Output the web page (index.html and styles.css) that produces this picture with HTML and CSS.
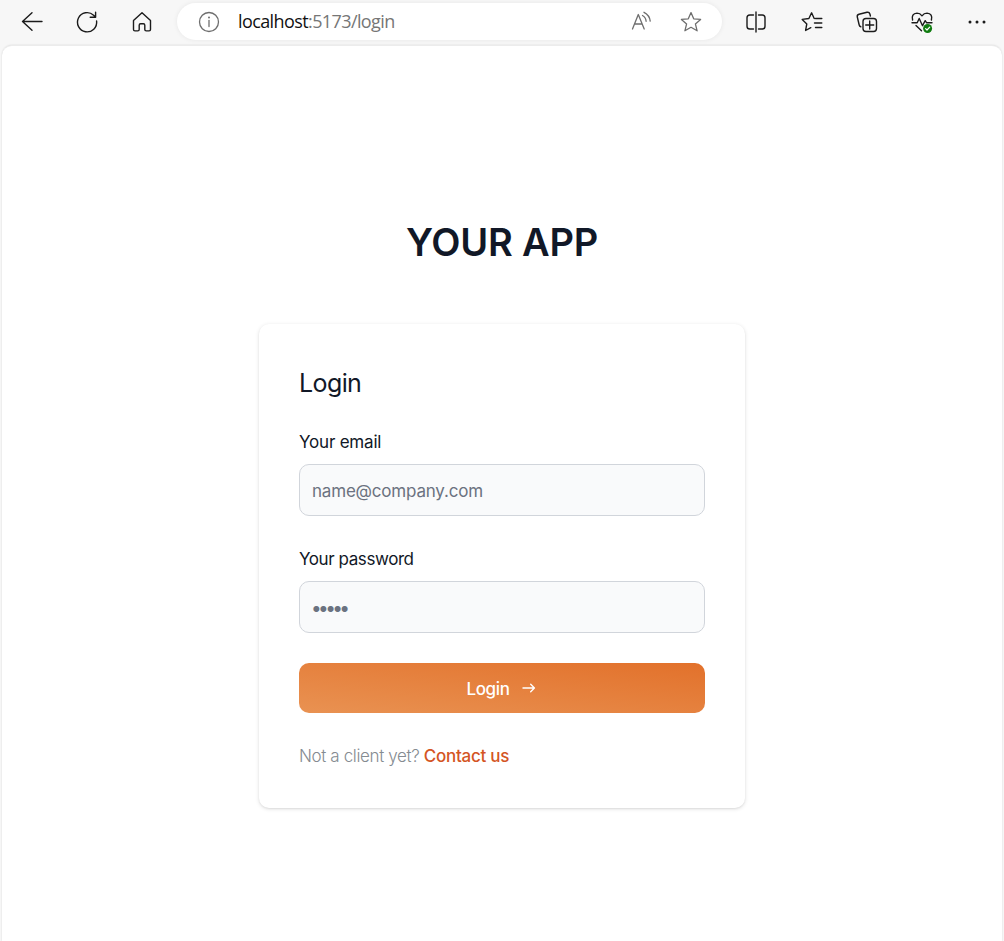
FILE: index.html
```html
<!DOCTYPE html>
<html lang="en">
<head>
<meta charset="utf-8">
<title>Login</title>
<link rel="stylesheet" href="styles.css">
</head>
<body>
<header class="toolbar">
  <svg class="icon back" viewBox="0 0 24 24"><path d="M22 11.500H2.500M12 2.800 2.500 11.500l9.500 8.700"/></svg>
  <svg class="icon reload" viewBox="0 0 24 24"><path d="M21.600 11A9.600 9.600 0 1 1 18.600 5.200L20.500 7M20.600 2.300v5h-5.400"/></svg>
  <svg class="icon home" viewBox="0 0 24 24"><path d="M3.500 10.500 12 2.700l8.500 7.800v9q0 1.400-1.400 1.400h-2.900q-1.400 0-1.400-1.400v-4.300q0-1.400-1.400-1.400h-2.800q-1.400 0-1.400 1.400v4.300q0 1.400-1.400 1.400H4.900q-1.400 0-1.400-1.400z"/></svg>
  <div class="address">
    <svg class="icon info" viewBox="0 0 24 24"><circle cx="12" cy="12" r="9.500"/><path d="M12 10.500v6"/><circle class="solid" cx="12" cy="7.600" r="1"/></svg>
    <span class="url"><span class="host">localhost</span><span class="path">:5173/login</span></span>
    <svg class="icon read" viewBox="0 0 24 24"><path d="M2.500 19 8.300 4.500 14.200 19M4.600 14h7.500M12.500 5.500q3.500 2 3.600 5.800M14 2.300q5.600 2.800 6.200 8.800"/></svg>
    <svg class="icon star" viewBox="0 0 24 24"><path d="m12 2.600 2.700 6.200 6.900.6-5.200 4.500 1.700 6.900-6.100-3.500-6.100 3.500 1.700-6.900-5.200-4.500 6.900-.6z"/></svg>
  </div>
  <svg class="icon split" viewBox="0 0 24 24"><path d="M9.500 5H5.800Q3 5 3 7.800v8.400Q3 19 5.800 19h3.700M14.500 5h3.700Q21 5 21 7.800v8.400q0 2.800-2.800 2.800h-3.700M12 2v20"/></svg>
  <svg class="icon favorites" viewBox="0 0 24 24"><path d="M14.200 8.500 11.600 2.800 8.900 8.500l-6.700.9 4.600 4.500-1.200 6.600 5.200-2.800M15.500 8.500h6.300M14.500 13h7.300M15.500 17.500h6.300"/></svg>
  <svg class="icon collections" viewBox="0 0 24 24"><path d="M5.800 16.800Q4.500 16.500 4.200 15L2.300 7Q1.800 4.800 4 4.200l8-1.900q2.200-.5 2.900 1.700l.5 2"/><rect x="8" y="8.500" width="13.500" height="13" rx="3"/><path d="M14.700 11v8M10.700 15h8"/></svg>
  <svg class="icon health" viewBox="0 0 24 24"><path d="M2.600 10Q1 3.500 7 3.100q3 0 5 2.700 2-2.700 5-2.700Q23 3.500 21.400 10M2 12.800h5.200l2-4.300 3.300 7.200 2.700-5 1.500 2.100H22M6 15.500l5.500 5.200"/><circle class="badge" cx="17.600" cy="18.500" r="4.500"/><path class="check" d="m15.600 18.600 1.400 1.400 2.700-2.800"/></svg>
  <svg class="icon more" viewBox="0 0 24 24"><circle class="solid" cx="5" cy="12" r="1.500"/><circle class="solid" cx="12" cy="12" r="1.500"/><circle class="solid" cx="19" cy="12" r="1.500"/></svg>
</header>
<main class="page">
  <h1 class="brand">YOUR APP</h1>
  <form class="card">
    <h2 class="title">Login</h2>
    <label class="label label-email" for="email">Your email</label>
    <input class="field" id="email" type="email" placeholder="name@company.com">
    <label class="label label-password" for="password">Your password</label>
    <input class="field password" id="password" type="password" placeholder="•••••">
    <button class="submit" type="button"><span>Login</span><svg class="arrow" viewBox="0 0 14 10"><path d="M1 5h11.300M8.700 1.300 12.400 5 8.700 8.700"/></svg></button>
    <p class="signup"><span class="question">Not a client yet?</span> <a class="contact" href="#">Contact us</a></p>
  </form>
</main>
</body>
</html>
```
FILE: styles.css
```css
* { box-sizing: border-box; }
body {
  margin: 0;
  height: 941px;
  overflow: hidden;
  display: flex;
  flex-direction: column;
  background: #f7f7f7;
  font-family: Inter, "Liberation Sans", sans-serif;
}
.toolbar {
  height: 45px;
  flex: none;
  display: flex;
  align-items: center;
  padding: 0 15px 2px 20px;
}
.icon {
  width: 24px;
  height: 24px;
  flex: none;
  fill: none;
  stroke: #1b1b1b;
  stroke-width: 1.4;
  stroke-linecap: round;
  stroke-linejoin: round;
}
.reload, .home { margin-left: 31px; }
.address {
  width: 545px;
  height: 37px;
  margin-left: 23px;
  padding: 0 19px 0 20px;
  display: flex;
  align-items: center;
  border-radius: 19px;
  background: #fff;
  box-shadow: 0 0 5px rgba(0, 0, 0, .07);
}
.address .icon { stroke: #6e6e6e; stroke-width: 1.3; }
.address .info .solid { fill: #6e6e6e; stroke: none; }
.url {
  flex: 1;
  margin: -2px 0 0 17px;
  font: 18px/24px "Open Sans", "Noto Sans", sans-serif;
  letter-spacing: -.6px;
}
.host { color: #111; }
.path { color: #767676; }
.star { margin-left: 25px; }
.split { margin-left: 22px; }
.favorites { margin-left: 32px; }
.collections, .health, .more { margin-left: 31px; }
.more .solid { fill: #1b1b1b; stroke: none; }
.badge { fill: #107c10; stroke: none; }
.check { stroke: #fff; stroke-width: 1.2; }
.page {
  flex: 1;
  margin: 0 2px;
  padding-top: 171px;
  display: flex;
  flex-direction: column;
  align-items: center;
  border: 1px solid #ececec;
  border-width: 1px 0 0;
  border-radius: 10px 10px 0 0;
  background: #fff;
  box-shadow: 0 0 2px rgba(0, 0, 0, .14);
}
.brand {
  margin: 0;
  font-size: 38px;
  line-height: 50px;
  font-weight: 600;
  letter-spacing: -.2px;
  color: #111827;
}
.card {
  width: 486px;
  height: 484px;
  margin-top: 57px;
  padding: 40px;
  display: flex;
  flex-direction: column;
  border-radius: 10px;
  background: #fff;
  box-shadow: 0 1px 4px rgba(0, 0, 0, .12), 0 1px 2px rgba(0, 0, 0, .06);
}
.title {
  margin: 0;
  font-size: 25px;
  line-height: 38px;
  font-weight: 400;
  letter-spacing: -.6px;
  color: #111827;
}
.label {
  font-size: 17px;
  line-height: 24px;
  font-weight: 400;
  letter-spacing: -.2px;
  color: #111827;
}
.label-email { margin-top: 28px; }
.label-password { margin-top: 31px; letter-spacing: -.42px; }
.field {
  height: 52px;
  margin-top: 10px;
  padding: 2px 12px 0;
  border: 1px solid #d1d5db;
  border-radius: 10px;
  background: #f9fafb;
  font: 17px/24px Inter, sans-serif;
  letter-spacing: -.2px;
}
.field::placeholder { color: #6b7280; opacity: 1; }
.password { padding-left: 11px; font-size: 19px; letter-spacing: -3.6px; }
.submit {
  height: 50px;
  margin-top: 30px;
  padding: 2px 0 0;
  display: flex;
  align-items: center;
  justify-content: center;
  gap: 13px;
  border: 0;
  border-radius: 10px;
  background: linear-gradient(to top right, #e99252, #e2712b);
  color: #fff;
  font: 500 17px/24px Inter, sans-serif;
  letter-spacing: -.4px;
}
.arrow {
  width: 14px;
  height: 10px;
  margin: -3px 1px 0 0;
  fill: none;
  stroke: #fff;
  stroke-width: 1.4;
  stroke-linecap: round;
  stroke-linejoin: round;
}
.signup {
  margin: 31px 0 0;
  font-size: 17px;
  line-height: 24px;
  letter-spacing: -.37px;
  white-space: nowrap;
}
.question { font-weight: 300; color: #858b91; }
.contact { font-weight: 500; letter-spacing: -.27px; color: #d45524; text-decoration: none; }
```
